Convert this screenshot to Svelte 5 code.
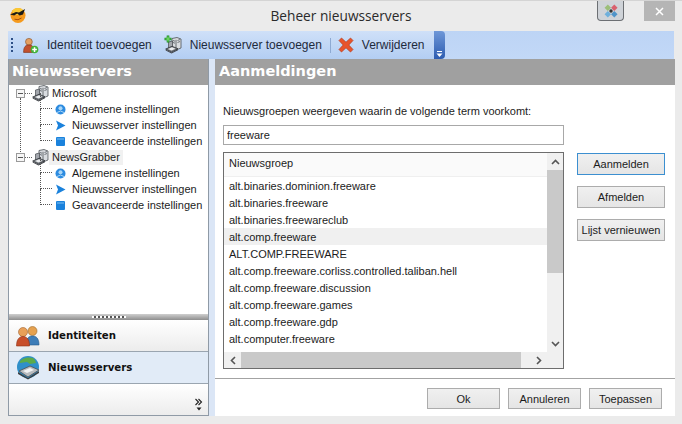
<script>
  const tree = [
    { name: 'Microsoft', active: false },
    { name: 'NewsGrabber', active: true }
  ];
  const groups = [
    'alt.binaries.dominion.freeware',
    'alt.binaries.freeware',
    'alt.binaries.freewareclub',
    'alt.comp.freeware',
    'ALT.COMP.FREEWARE',
    'alt.comp.freeware.corliss.controlled.taliban.hell',
    'alt.comp.freeware.discussion',
    'alt.comp.freeware.games',
    'alt.comp.freeware.gdp',
    'alt.computer.freeware'
  ];
</script>

{#snippet server(size)}
  <svg width={size} height={size} viewBox="0 0 17 17">
    <path d="M7 1.500l5-1 4 1.500v9l-5 2-4-1.500z" fill="#d9dce0" stroke="#4c5056" stroke-width="0.8" />
    <path d="M11 2.800v9.700" stroke="#4c5056" stroke-width="0.8" />
    <path d="M8 3.500l2 .7M8 5.500l2 .7M12.500 3.500l2.500-1M12.500 5.500l2.500-1" stroke="#6d7278" />
    <path d="M3.500 5l4-1v7l-4 1z" fill="#a3a7ad" stroke="#44484e" stroke-width="0.7" />
    <path d="M.7 12l6.300-2.700 6 2.400-6.500 3.500z" fill="#777b81" stroke="#34373c" stroke-width="0.8" />
    <path d="M3 12l4-1.700 3.500 1.400-4 1.800z" fill="#eceef0" />
    <path d="M.7 12.500l5.800 3 6.500-3.500v1.200l-6.500 3.300-5.800-3z" fill="#43464b" />
  </svg>
{/snippet}

<div class="window">
  <header class="titlebar">
    <svg class="smiley" width="18" height="18" viewBox="0 0 18 18">
      <circle cx="9" cy="9.500" r="7.500" fill="#f59a1d" />
      <path d="M3 5a7.500 7.500 0 0 1 12 0l-3 4H5z" fill="#fbc934" />
      <path d="M1 8.500l6-2.500 3 .6 6-3.600-2 5.500-3.400 1-2.400-2-3 2z" fill="#1c1a16" />
      <path d="M5.500 13.200q3.500 1.600 7-1.200" stroke="#a8500c" fill="none" />
    </svg>
    <h1>Beheer nieuwsservers</h1>
    <div class="controls">
      <span class="tile-btn">
        <svg width="14" height="14" viewBox="0 0 14 14">
          <rect x="1.500" y="1.500" width="4.600" height="4.600" transform="rotate(45 3.800 3.800)" fill="#9cbf7a" />
          <rect x="8" y="1.500" width="4.600" height="4.600" transform="rotate(45 10.300 3.800)" fill="#d9606d" />
          <rect x="1.500" y="8" width="4.600" height="4.600" transform="rotate(45 3.800 10.300)" fill="#6fb0dc" />
          <rect x="8" y="8" width="4.600" height="4.600" transform="rotate(45 10.300 10.300)" fill="#4f94c9" />
          <circle cx="7" cy="7" r="1.700" fill="#333" />
        </svg>
      </span>
      <span class="close-btn">
        <svg width="9" height="9" viewBox="0 0 9 9"><path d="M1 1l7 7M8 1l-7 7" stroke="#fff" stroke-width="1.500" /></svg>
      </span>
    </div>
  </header>

  <nav class="toolbar">
    <div class="tools">
      <span class="grip"></span>
      <span class="tool first">
        <svg width="17" height="17" viewBox="0 0 16 16">
          <circle cx="6.500" cy="4.500" r="3.200" fill="#e4a062" stroke="#8a5227" stroke-width="0.6" />
          <path d="M1.500 14.500c0-5.500 2-7 5-7s5 1.500 5 7z" fill="#c2512f" stroke="#7c3118" stroke-width="0.6" />
          <circle cx="11.800" cy="11.800" r="3.600" fill="#43b23b" />
          <path d="M11.800 9.600v4.400M9.600 11.800h4.400" stroke="#fff" stroke-width="1.400" />
        </svg>
        Identiteit toevoegen
      </span>
      <span class="tool second">
        <span class="plus-server">
          {@render server(17)}
          <svg class="plus" width="8" height="8" viewBox="0 0 8 8"><path d="M4 .5v7M.5 4h7" stroke="#1d8f22" stroke-width="2.600" /><path d="M4 1.500v5M1.500 4h5" stroke="#7fe36f" stroke-width="1.200" /></svg>
        </span>
        Nieuwsserver toevoegen
      </span>
      <span class="sep"></span>
      <span class="tool third">
        <svg width="16" height="16" viewBox="0 0 16 16">
          <path d="M1 3.500L3.500 1 8 5.200 12.500 1 15 3.500 10.800 8 15 12.500 12.500 15 8 10.800 3.500 15 1 12.500 5.200 8z" fill="#e8542c" stroke="#b5391a" stroke-width="0.7" />
        </svg>
        Verwijderen
      </span>
      <span class="overflow">
        <svg width="7" height="8" viewBox="0 0 7 8"><path d="M1 1.500h5" stroke="#fff" /><path d="M.5 3.500h6L3.500 7z" fill="#fff" /></svg>
      </span>
    </div>
  </nav>

  <main class="body">
    <aside class="side">
      <div class="head">Nieuwsservers</div>
      <div class="tree">
        {#each tree as node, i}
          <div class="node" class:last={i === tree.length - 1}>
            <div class="root">
              <span class="expander"></span>
              <span class="stub"></span>
              {@render server(17)}
              <span class="root-label" class:active={node.active}>{node.name}</span>
            </div>
            <ul>
              <li>
                <span class="twig"></span>
                <svg width="11" height="11" viewBox="0 0 11 11"><circle cx="5.500" cy="5.500" r="5" fill="#2c8be0" /><circle cx="5.500" cy="4.200" r="2" fill="#a9d6f7" /><path d="M2 8.500q3.500-3 7 0" stroke="#a9d6f7" fill="none" /></svg>
                <span>Algemene instellingen</span>
              </li>
              <li>
                <span class="twig"></span>
                <svg width="11" height="11" viewBox="0 0 11 11"><path d="M1 .5l9.500 5-9.500 5 2-5z" fill="#1b82dc" /></svg>
                <span>Nieuwsserver instellingen</span>
              </li>
              <li>
                <span class="twig"></span>
                <svg width="11" height="11" viewBox="0 0 11 11"><rect x="1" y="1" width="9" height="9" rx="1" fill="#1b82dc" /><path d="M2 3h7" stroke="#7cc0f3" /></svg>
                <span>Geavanceerde instellingen</span>
              </li>
            </ul>
          </div>
        {/each}
      </div>
      <div class="splitter"><span></span></div>
      <div class="section">
        <svg width="24" height="22" viewBox="0 0 24 22">
          <circle cx="16.500" cy="6" r="4.500" fill="#e5a14f" stroke="#9a6a2a" stroke-width="0.6" />
          <path d="M10 20c0-7 3-9 6.500-9s6.500 2 6.500 9z" fill="#3d7db8" stroke="#255a8c" stroke-width="0.6" />
          <circle cx="7" cy="7" r="4.500" fill="#e8a058" stroke="#a36330" stroke-width="0.6" />
          <path d="M.5 21c0-7 3-9.500 6.500-9.500s6.500 2.500 6.500 9.500z" fill="#c84f2a" stroke="#8f3216" stroke-width="0.6" />
        </svg>
        Identiteiten
      </div>
      <div class="section current">
        <svg width="24" height="24" viewBox="0 0 24 24">
          <circle cx="12" cy="11" r="11" fill="#2f8fc9" />
          <path d="M4 5q5-5 13-3 3 2 3 5l-6 1-3-2-7 1z" fill="#5bab4a" />
          <path d="M3 15l11-5 9 4-11 7z" fill="#b9bcbf" stroke="#4a4d50" stroke-width="0.8" />
          <path d="M7 15l7-3 4 2-7 3z" fill="#f1f2f3" />
          <path d="M2 16l10 6 11-7v2l-11 6.500L2 18z" fill="#3c3f42" />
        </svg>
        Nieuwsservers
      </div>
      <div class="section more">
        <span class="chevrons">
          <svg width="8" height="13" viewBox="0 0 8 13">
            <path d="M.5 1l3 3-3 3M3.500 1l3 3-3 3" stroke="#222" fill="none" stroke-width="1.100" />
            <path d="M1.500 9.500h5L4 12.500z" fill="#222" />
          </svg>
        </span>
      </div>
    </aside>

    <section class="panel">
      <div class="head">Aanmeldingen</div>
      <div class="content">
        <label for="term">Nieuwsgroepen weergeven waarin de volgende term voorkomt:</label>
        <input id="term" value="freeware" />
        <div class="lower">
          <div class="list">
            <div class="list-main">
              <div class="list-body">
                <div class="list-head">Nieuwsgroep</div>
                {#each groups as group, i}
                  <div class="row" class:sel={i === 3}>{group}</div>
                {/each}
              </div>
              <div class="vscroll">
                <span class="arrow">
                  <svg width="9" height="6" viewBox="0 0 9 6"><path d="M1 5l3.500-3.500L8 5" stroke="#555" stroke-width="1.600" fill="none" /></svg>
                </span>
                <span class="thumb"></span>
                <span class="spacer"></span>
                <span class="arrow">
                  <svg width="9" height="6" viewBox="0 0 9 6"><path d="M1 1l3.500 3.500L8 1" stroke="#555" stroke-width="1.600" fill="none" /></svg>
                </span>
              </div>
            </div>
            <div class="hscroll">
              <span class="arrow">
                <svg width="6" height="9" viewBox="0 0 6 9"><path d="M5 1L1.500 4.500 5 8" stroke="#555" stroke-width="1.600" fill="none" /></svg>
              </span>
              <span class="hthumb"></span>
              <span class="arrow">
                <svg width="6" height="9" viewBox="0 0 6 9"><path d="M1 1l3.500 3.500L1 8" stroke="#555" stroke-width="1.600" fill="none" /></svg>
              </span>
              <span class="corner"></span>
            </div>
          </div>
          <div class="actions">
            <button class="focus">Aanmelden</button>
            <button>Afmelden</button>
            <button>Lijst vernieuwen</button>
          </div>
        </div>
      </div>
      <footer>
        <button>Ok</button>
        <button>Annuleren</button>
        <button>Toepassen</button>
      </footer>
    </section>
  </main>
</div>

<style>
  :global(body) {
    margin: 0;
    background: #ebebeb;
  }

  .window {
    width: 682px;
    height: 424px;
    box-sizing: border-box;
    padding: 0 8px 8px;
    background: #ebebeb;
    border-top: 1px solid #d4d4d4;
    display: flex;
    flex-direction: column;
    font: 11px "Liberation Sans", sans-serif;
    color: #1c1c1c;
    overflow: hidden;
  }

  /* title bar */
  .titlebar {
    height: 30px;
    flex: none;
    display: grid;
    grid-template-columns: 1fr auto 1fr;
    align-items: center;
    margin: 0 -8px;
  }
  .smiley {
    margin: 0 0 2px 9px;
  }
  h1 {
    margin: 0;
    font: 400 13.700px "Open Sans", sans-serif;
    color: #2a2a2a;
    padding-bottom: 1px;
  }
  .controls {
    justify-self: end;
    align-self: start;
    display: flex;
    gap: 20px;
  }
  .tile-btn {
    width: 27px;
    height: 20px;
    box-sizing: border-box;
    border: 1px solid #6c6f73;
    border-top: 0;
    border-radius: 0 0 4px 4px;
    background: #cfd3d8;
    display: flex;
    align-items: center;
    justify-content: center;
  }
  .close-btn {
    width: 31px;
    height: 20px;
    background: #b5b5b5;
    display: flex;
    align-items: center;
    justify-content: center;
    margin-right: 7px;
  }

  /* toolbar */
  .toolbar {
    height: 28px;
    flex: none;
    background: linear-gradient(#bdd4f5, #c2d8f7);
  }
  .tools {
    width: 437px;
    height: 100%;
    box-sizing: border-box;
    display: flex;
    align-items: center;
    background: linear-gradient(#cfe0f8, #b3cef3);
    border-radius: 0 5px 5px 0;
    font-size: 12px;
    color: #1e2a3c;
  }
  .grip {
    width: 2px;
    height: 15px;
    margin-left: 3px;
    background: repeating-linear-gradient(#2d4f86 0 2px, transparent 2px 4px);
  }
  .tool {
    display: flex;
    align-items: center;
    gap: 8px;
    white-space: nowrap;
  }
  .first {
    margin-left: 9px;
  }
  .second {
    margin-left: 13px;
  }
  .third {
    margin-left: 7px;
  }
  .plus-server {
    position: relative;
    display: flex;
  }
  .plus {
    position: absolute;
    left: -1px;
    top: -2px;
  }
  .sep {
    width: 1px;
    height: 15px;
    background: #8eaad3;
    margin-left: 8px;
  }
  .overflow {
    width: 11px;
    height: 100%;
    margin-left: auto;
    background: linear-gradient(#6e97d8, #2d5cb0);
    border-radius: 0 4px 4px 0;
    display: flex;
    align-items: flex-end;
    justify-content: center;
    padding-bottom: 1px;
    box-sizing: border-box;
  }

  /* panes */
  .body {
    flex: 1;
    min-height: 0;
    display: flex;
    gap: 6px;
    background: #dbe6f6;
  }
  .head {
    height: 26px;
    flex: none;
    box-sizing: border-box;
    padding-left: 4px;
    background: #a0a0a0;
    color: #fff;
    font: 700 14.500px/25px "DejaVu Sans", sans-serif;
  }
  .side .head {
    padding-left: 3px;
  }
  .side {
    width: 201px;
    flex: none;
    display: flex;
    flex-direction: column;
    box-sizing: border-box;
    border: 1px solid #8f9aa6;
    border-top: 0;
    background: #fff;
  }
  .tree {
    flex: 1;
    padding: 0 0 0 7px;
  }
  .node {
    position: relative;
    width: fit-content;
  }
  .node:not(.last)::before {
    content: "";
    position: absolute;
    left: 4px;
    top: 13px;
    height: 58px;
    border-left: 1px dotted #555;
  }
  .root {
    height: 16px;
    display: flex;
    align-items: center;
  }
  .expander {
    width: 9px;
    height: 9px;
    box-sizing: border-box;
    border: 1px solid #9a9a9a;
    background: linear-gradient(to bottom, transparent 3px, #555 3px, #555 4px, transparent 4px) center/5px 7px no-repeat,
      #f6f6f6;
  }
  .stub {
    width: 7px;
    border-top: 1px dotted #666;
  }
  .root svg {
    flex: none;
  }
  .root-label {
    padding: 0 3px;
    line-height: 15px;
  }
  .root-label.active {
    background: #f1f1f1;
  }
  ul {
    list-style: none;
    margin: 0;
    padding: 0 0 0 24px;
  }
  li {
    height: 16px;
    display: flex;
    align-items: center;
    white-space: nowrap;
  }
  li svg {
    margin: 0 6px 0 3px;
    flex: none;
  }
  .twig {
    width: 12px;
    height: 16px;
    margin-top: -16px;
    box-sizing: border-box;
    border-left: 1px dotted #555;
    border-bottom: 1px dotted #555;
  }
  .splitter {
    height: 6px;
    flex: none;
    background: linear-gradient(#cfcfcf, #8e8e8e);
    display: flex;
    justify-content: center;
    align-items: center;
  }
  .splitter span {
    width: 34px;
    height: 2px;
    background: repeating-linear-gradient(90deg, #fff 0 2px, #555 2px 4px);
  }
  .section {
    height: 32px;
    flex: none;
    box-sizing: border-box;
    display: flex;
    align-items: center;
    gap: 8px;
    padding-left: 7px;
    background: linear-gradient(#fff, #ececec);
    font: 700 10.200px "DejaVu Sans", sans-serif;
    color: #111;
    border-bottom: 1px solid #9aa5b0;
  }
  .section.current {
    background: #e1ebf7;
  }
  .section.more {
    border-bottom: 0;
    justify-content: flex-end;
    padding-right: 5px;
    height: 31px;
  }
  .chevrons {
    display: flex;
    margin-top: 9px;
  }

  .panel {
    width: 460px;
    flex: none;
    display: flex;
    flex-direction: column;
    background: #fff;
  }
  .content {
    flex: 1;
    min-height: 0;
    padding: 19px 9px 9px 8px;
    display: flex;
    flex-direction: column;
    border-bottom: 1px solid #a3a3a3;
  }
  label {
    line-height: 15px;
    height: 15px;
    margin-bottom: 6px;
    color: #222;
  }
  input {
    width: 341px;
    height: 20px;
    box-sizing: border-box;
    border: 1px solid #a8a8a8;
    padding: 0 3px;
    font: 11px "Liberation Sans", sans-serif;
    color: #222;
    outline: 0;
    margin: 0 0 7px;
  }
  .lower {
    display: flex;
    gap: 13px;
  }
  .list {
    width: 341px;
    height: 217px;
    box-sizing: border-box;
    border: 1px solid #6d6d6d;
    display: flex;
    flex-direction: column;
  }
  .list-main {
    flex: 1;
    min-height: 0;
    display: flex;
  }
  .list-body {
    flex: 1;
    min-width: 0;
    overflow: hidden;
  }
  .list-head {
    height: 24px;
    line-height: 21px;
    padding-left: 5px;
    border-bottom: 1px solid #efefef;
    background: #fafafa;
    box-sizing: border-box;
  }
  .row {
    height: 17px;
    line-height: 19px;
    padding-left: 5px;
    white-space: nowrap;
  }
  .row.sel {
    background: #f0f0f0;
  }
  .vscroll {
    width: 16px;
    flex: none;
    display: flex;
    flex-direction: column;
    background: #f0f0f0;
  }
  .arrow {
    flex: none;
    height: 17px;
    display: flex;
    align-items: center;
    justify-content: center;
  }
  .thumb {
    height: 103px;
    flex: none;
    background: #c9c9c9;
  }
  .spacer {
    flex: 1;
  }
  .hscroll {
    height: 16px;
    flex: none;
    display: flex;
    background: #f0f0f0;
  }
  .hscroll .arrow {
    width: 17px;
    height: 16px;
  }
  .hthumb {
    width: 280px;
    flex: none;
    background: #c9c9c9;
    margin-right: auto;
  }
  .corner {
    width: 16px;
    flex: none;
  }
  .actions {
    display: flex;
    flex-direction: column;
    gap: 11px;
    padding-top: 1px;
  }
  button {
    box-sizing: border-box;
    height: 22px;
    width: 88px;
    padding: 0;
    border: 1px solid #acacac;
    background: linear-gradient(#f0f0f0, #e5e5e5);
    font: 11px "Liberation Sans", sans-serif;
    color: #1c1c1c;
  }
  button.focus {
    border-color: #3c8fd0;
  }
  footer {
    height: 37px;
    flex: none;
    box-sizing: border-box;
    display: flex;
    justify-content: flex-end;
    align-items: center;
    gap: 8px;
    padding: 2px 13px 0 0;
  }
  footer button {
    width: 73px;
    height: 21px;
  }
</style>
